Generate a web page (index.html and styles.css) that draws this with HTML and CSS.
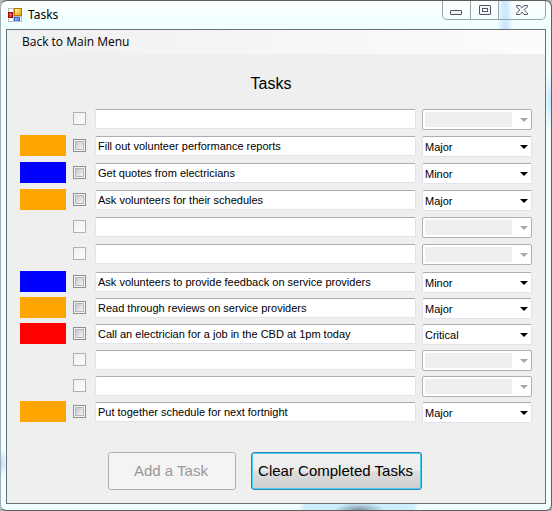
FILE: index.html
```html
<!DOCTYPE html>
<html lang="en">
<head>
<meta charset="utf-8">
<title>Tasks</title>
<link rel="stylesheet" href="styles.css">
</head>
<body>
<div class="window">
  <header class="titlebar">
    <svg class="app-icon" width="14" height="14" viewBox="0 0 14 14" shape-rendering="crispEdges" aria-hidden="true">
      <defs>
        <linearGradient id="gold" x2="1" y2="1"><stop offset="0" stop-color="#fff3a0"/><stop offset="1" stop-color="#e8a400"/></linearGradient>
        <linearGradient id="sky" x2="1" y2="1"><stop offset="0" stop-color="#9cc8ff"/><stop offset="1" stop-color="#3a74dc"/></linearGradient>
      </defs>
      <path fill="#b8bcc0" d="M0 0h14v14H0z"/>
      <path fill="#fff" d="M1 1h4v3H1zM1 10h4v3H1zM12 9h1v4h-1z"/>
      <path fill="#a00a0a" d="M0 4h5v6H0z"/>
      <path fill="#e03a30" d="M1 5h3v4H1z"/>
      <path fill="#ffb0a0" d="M2 6h1v1H2z"/>
      <path fill="#b07800" d="M6 0h8v8H6z"/>
      <path fill="url(#gold)" d="M7 1h6v6H7z"/>
      <path fill="#3868c0" d="M6 9h6v4H6z"/>
      <path fill="url(#sky)" d="M7 10h4v3H7z"/>
    </svg>
    <span class="window-title">Tasks</span>
    <div class="window-buttons">
      <button class="window-button" type="button" aria-label="Minimize">
        <svg width="13" height="11" viewBox="0 0 13 11"><rect x=".5" y="5.5" width="11" height="4" rx=".5" fill="#f4f4f4" stroke="#505468"/></svg>
      </button>
      <button class="window-button" type="button" aria-label="Maximize">
        <svg width="12" height="11" viewBox="0 0 12 11"><rect x=".5" y=".5" width="11" height="9" rx=".5" fill="#f4f4f4" stroke="#505468"/><rect x="3.500" y="3.500" width="5" height="3" fill="#fff" stroke="#505468"/></svg>
      </button>
      <button class="window-button window-button-close" type="button" aria-label="Close">
        <svg width="12" height="11" viewBox="0 0 12 11"><path d="M.5.5h3.500L6 2.800 8 .5h3.500v1.300L8.300 5l3.200 3.200v1.300H8L6 7.200 4 9.500H.5V8.200L3.700 5 .5 1.800z" fill="#f4f4f4" stroke="#505468"/></svg>
      </button>
    </div>
  </header>
  <div class="client">
    <nav class="menubar"><a class="menu-link" href="#main">Back to Main Menu</a></nav>
    <main class="content">
      <h1 class="heading">Tasks</h1>
      <form class="tasks">
        <div class="task-group">
          <div class="task">
            <span class="swatch"></span>
            <input class="check" type="checkbox" aria-label="Task 1 done" disabled>
            <input class="name" type="text" aria-label="Task 1" value="">
            <div class="priority"><select class="level" aria-label="Task 1 priority" disabled><option></option></select><svg class="arrow" width="8" height="4" viewBox="0 0 8 4"><path d="M0 0h8L4 4z"/></svg></div>
          </div>
          <div class="task">
            <span class="swatch major"></span>
            <input class="check" type="checkbox" aria-label="Task 2 done">
            <input class="name" type="text" aria-label="Task 2" value="Fill out volunteer performance reports">
            <div class="priority"><select class="level" aria-label="Task 2 priority"><option>Minor</option><option selected>Major</option><option>Critical</option></select><svg class="arrow" width="8" height="4" viewBox="0 0 8 4"><path d="M0 0h8L4 4z"/></svg></div>
          </div>
          <div class="task">
            <span class="swatch minor"></span>
            <input class="check" type="checkbox" aria-label="Task 3 done">
            <input class="name" type="text" aria-label="Task 3" value="Get quotes from electricians">
            <div class="priority"><select class="level" aria-label="Task 3 priority"><option selected>Minor</option><option>Major</option><option>Critical</option></select><svg class="arrow" width="8" height="4" viewBox="0 0 8 4"><path d="M0 0h8L4 4z"/></svg></div>
          </div>
          <div class="task">
            <span class="swatch major"></span>
            <input class="check" type="checkbox" aria-label="Task 4 done">
            <input class="name" type="text" aria-label="Task 4" value="Ask volunteers for their schedules">
            <div class="priority"><select class="level" aria-label="Task 4 priority"><option>Minor</option><option selected>Major</option><option>Critical</option></select><svg class="arrow" width="8" height="4" viewBox="0 0 8 4"><path d="M0 0h8L4 4z"/></svg></div>
          </div>
          <div class="task">
            <span class="swatch"></span>
            <input class="check" type="checkbox" aria-label="Task 5 done" disabled>
            <input class="name" type="text" aria-label="Task 5" value="">
            <div class="priority"><select class="level" aria-label="Task 5 priority" disabled><option></option></select><svg class="arrow" width="8" height="4" viewBox="0 0 8 4"><path d="M0 0h8L4 4z"/></svg></div>
          </div>
          <div class="task">
            <span class="swatch"></span>
            <input class="check" type="checkbox" aria-label="Task 6 done" disabled>
            <input class="name" type="text" aria-label="Task 6" value="">
            <div class="priority"><select class="level" aria-label="Task 6 priority" disabled><option></option></select><svg class="arrow" width="8" height="4" viewBox="0 0 8 4"><path d="M0 0h8L4 4z"/></svg></div>
          </div>
        </div>
        <div class="task-group task-group-tight">
          <div class="task">
            <span class="swatch minor"></span>
            <input class="check" type="checkbox" aria-label="Task 7 done">
            <input class="name" type="text" aria-label="Task 7" value="Ask volunteers to provide feedback on service providers">
            <div class="priority"><select class="level" aria-label="Task 7 priority"><option selected>Minor</option><option>Major</option><option>Critical</option></select><svg class="arrow" width="8" height="4" viewBox="0 0 8 4"><path d="M0 0h8L4 4z"/></svg></div>
          </div>
          <div class="task">
            <span class="swatch major"></span>
            <input class="check" type="checkbox" aria-label="Task 8 done">
            <input class="name" type="text" aria-label="Task 8" value="Read through reviews on service providers">
            <div class="priority"><select class="level" aria-label="Task 8 priority"><option>Minor</option><option selected>Major</option><option>Critical</option></select><svg class="arrow" width="8" height="4" viewBox="0 0 8 4"><path d="M0 0h8L4 4z"/></svg></div>
          </div>
          <div class="task">
            <span class="swatch critical"></span>
            <input class="check" type="checkbox" aria-label="Task 9 done">
            <input class="name" type="text" aria-label="Task 9" value="Call an electrician for a job in the CBD at 1pm today">
            <div class="priority"><select class="level" aria-label="Task 9 priority"><option>Minor</option><option>Major</option><option selected>Critical</option></select><svg class="arrow" width="8" height="4" viewBox="0 0 8 4"><path d="M0 0h8L4 4z"/></svg></div>
          </div>
          <div class="task">
            <span class="swatch"></span>
            <input class="check" type="checkbox" aria-label="Task 10 done" disabled>
            <input class="name" type="text" aria-label="Task 10" value="">
            <div class="priority"><select class="level" aria-label="Task 10 priority" disabled><option></option></select><svg class="arrow" width="8" height="4" viewBox="0 0 8 4"><path d="M0 0h8L4 4z"/></svg></div>
          </div>
          <div class="task">
            <span class="swatch"></span>
            <input class="check" type="checkbox" aria-label="Task 11 done" disabled>
            <input class="name" type="text" aria-label="Task 11" value="">
            <div class="priority"><select class="level" aria-label="Task 11 priority" disabled><option></option></select><svg class="arrow" width="8" height="4" viewBox="0 0 8 4"><path d="M0 0h8L4 4z"/></svg></div>
          </div>
          <div class="task">
            <span class="swatch major"></span>
            <input class="check" type="checkbox" aria-label="Task 12 done">
            <input class="name" type="text" aria-label="Task 12" value="Put together schedule for next fortnight">
            <div class="priority"><select class="level" aria-label="Task 12 priority"><option>Minor</option><option selected>Major</option><option>Critical</option></select><svg class="arrow" width="8" height="4" viewBox="0 0 8 4"><path d="M0 0h8L4 4z"/></svg></div>
          </div>
        </div>
        <div class="actions">
          <button class="action action-add" type="button" disabled>Add a Task</button>
          <button class="action action-clear" type="button">Clear Completed Tasks</button>
        </div>
      </form>
    </main>
  </div>
</div>
</body>
</html>
```
FILE: styles.css
```css
* {
  box-sizing: border-box;
}

body {
  margin: 0;
  background: #b4b8b8;
  color: #000;
  font-family: "Liberation Sans", Arial, sans-serif;
}

/* Glass window frame */
.window {
  display: flex;
  flex-direction: column;
  min-height: 100vh;
  padding: 0 5px 6px;
  border: 1px solid #5c6060;
  border-left-color: #a0b0b0;
  border-radius: 7px 7px 6px 6px;
  background:
    radial-gradient(ellipse 7px 14px at 0 462px, #c0dcff, transparent),
    radial-gradient(ellipse 8px 30px at 100% 100px, #c4e8ff, transparent),
    radial-gradient(ellipse 26px 7px at 358px 100%, #8090a0, transparent),
    linear-gradient(90deg, transparent 298px, #cceeff 304px, #cceeff 412px, transparent 418px) 0 100% / 100% 6px no-repeat,
    linear-gradient(90deg, transparent 496px, #d0e8ff 502px, #d0e8ff 506px, transparent 512px) 0 0 / 100% 28px no-repeat,
    linear-gradient(#fff, #f0ffff 20px);
}

.titlebar {
  display: flex;
  align-items: flex-start;
  height: 28px;
}

.app-icon {
  margin: 7px 6px 0 2px;
}

.window-title {
  margin-top: 6px;
  font: 12px/16px "Noto Sans", sans-serif;
}

.window-buttons {
  display: flex;
  margin-left: auto;
  height: 19px;
  border: 1px solid #98a4a4;
  border-top: 0;
  border-radius: 0 0 5px 5px;
}

.window-button {
  display: flex;
  justify-content: center;
  width: 28px;
  padding: 4px 0 0;
  border: 0;
  border-right: 1px solid #98a4a4;
  background: none;
}

.window-button-close {
  width: 46px;
  border-right: 0;
}

.client {
  flex: 1;
  border: 1px solid #687070;
  background: #efefef;
}

.menubar {
  height: 24px;
  padding: 4px 15px;
  background: linear-gradient(90deg, #f0f0f0, #fcfcfc);
}

.menu-link {
  display: block;
  color: #000;
  font: 12px/16px "Open Sans", sans-serif;
  text-decoration: none;
}

.content {
  padding: 20px 13px 12px;
}

.heading {
  margin: 0 0 15px;
  padding-right: 10px;
  font-size: 16px;
  font-weight: 400;
  line-height: 20px;
  text-align: center;
}

/* Task rows */
.task-group {
  display: grid;
  gap: 6px;
}

.task-group-tight {
  gap: 5px;
  margin-top: 7px;
}

.task {
  display: grid;
  grid-template-columns: 46px 13px 1fr 110px;
  column-gap: 6px;
  height: 21px;
}

.swatch {
  height: 21px;
  margin-top: -1px;
}

.major {
  background: #ffa500;
}

.minor {
  background: #0000ff;
}

.critical {
  background: #ff0000;
}

.check {
  appearance: none;
  width: 13px;
  height: 13px;
  margin: 3px 0 0 1px;
  border: 1px solid #8e8f8f;
  background: linear-gradient(135deg, #c4c8d0, #f4f4f4) content-box, #fff;
  box-shadow: inset 0 0 0 1px #f4f4f4, inset 0 0 0 2px #b4b8bc;
  padding: 2px;
}

.check:disabled {
  border-color: #b1b1b1;
  background: linear-gradient(135deg, #f0f0f0, #fcfcfc);
  box-shadow: none;
}

.name,
.level {
  border: 1px solid #e2e3ea;
  border-top-color: #abadb3;
  border-radius: 2px;
  background: #fff;
  color: #000;
  font: 11px/16px "Liberation Sans", Arial, sans-serif;
}

.name {
  min-width: 0;
  height: 20px;
  margin-left: 4px;
  padding: 0 2px;
}

.priority {
  position: relative;
}

.level {
  appearance: none;
  display: block;
  width: 100%;
  height: 21px;
  padding: 0 20px 0 2px;
}

.level:disabled {
  border-color: #b1b1b1;
  background: linear-gradient(#efefef, #efefef) 2px 2px / calc(100% - 21px) calc(100% - 4px) no-repeat #fff;
  opacity: 1;
}

.arrow {
  position: absolute;
  top: 9px;
  right: 4px;
  pointer-events: none;
}

.level:disabled + .arrow {
  fill: #a8a8a8;
}

/* Form buttons */
.actions {
  display: grid;
  grid-template-columns: 128px 171px;
  justify-content: center;
  column-gap: 15px;
  margin-top: 29px;
  padding-right: 22px;
}

.action {
  height: 38px;
  padding: 0 2px 0 0;
  border: 1px solid #adb2b5;
  border-radius: 3px;
  background: #f4f4f4;
  color: #000;
  font: 15px/20px "Liberation Sans", Arial, sans-serif;
  white-space: nowrap;
}

.action:disabled {
  color: #989898;
}

.action-clear {
  border-color: #3c7fb1;
  background: linear-gradient(#f2f2f2, #ebebeb 50%, #dddddd 50%, #cfcfcf);
  box-shadow: inset 0 0 0 1px #48d0f4;
}
```
